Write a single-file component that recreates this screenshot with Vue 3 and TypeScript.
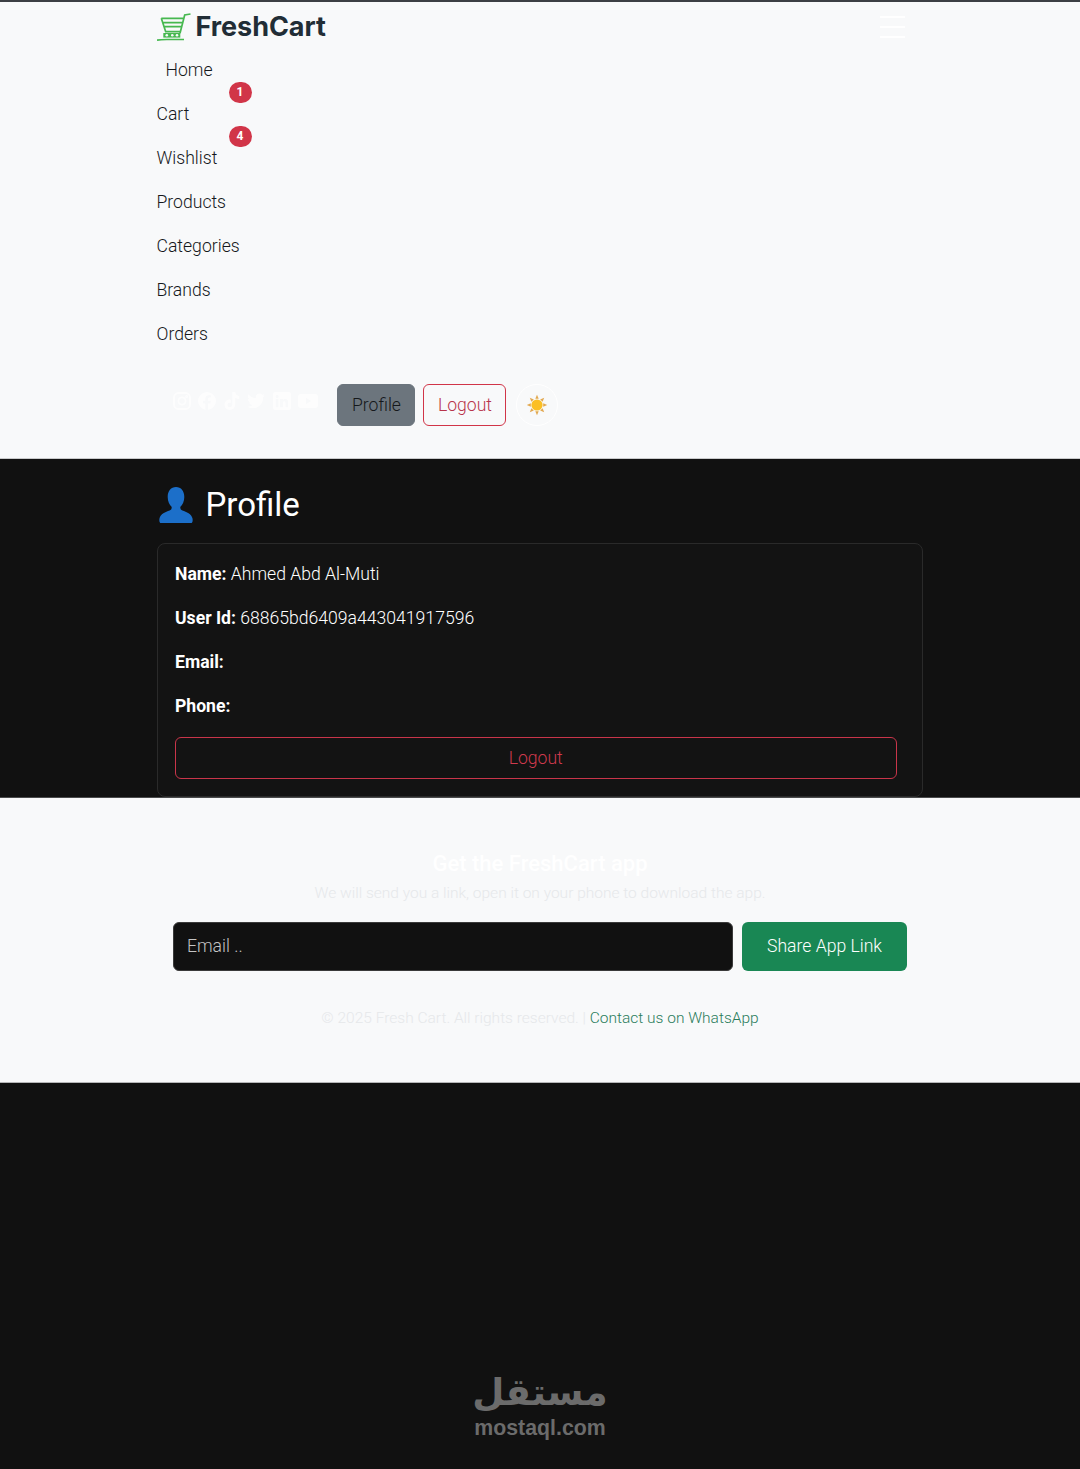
<template>
  <div class="page">
    <header class="navbar">
      <div class="nav-inner">
        <div class="brand-row">
          <a class="brand">
            <svg class="brand-cart" viewBox="0 0 34 28" fill="none" stroke="#46b84f" stroke-width="1.700">
              <path d="M33.500 1L27.700 2 23 20.300" />
              <path d="M4.300 5.300H26.300M6 9.700H25.200M7.200 13.700H24.200M4.300 5.300L8.700 18.700H23.500" />
              <rect x="6.300" y="20" width="17" height="4.600" fill="#46b84f" stroke="none" />
              <circle cx="9.800" cy="22.300" r="1.300" fill="#f8f9fa" stroke="none" />
              <circle cx="15.300" cy="22.300" r="1.300" fill="#f8f9fa" stroke="none" />
              <circle cx="20" cy="22.300" r="1.300" fill="#f8f9fa" stroke="none" />
              <path d="M0 27.200C4 26.300 8 26.500 13 26.500H27" />
            </svg>
            <span class="brand-name">FreshCart</span>
          </a>
          <button class="toggler" type="button">
            <span></span><span></span><span></span>
          </button>
        </div>

        <ul class="nav-list">
          <li v-for="item in navItems" :key="item.label" class="nav-item" :class="{ first: item.label === 'Home' }">
            <a>{{ item.label }}</a>
            <span v-if="item.badge" class="badge">{{ item.badge }}</span>
          </li>
        </ul>

        <div class="actions">
          <div class="socials">
            <svg width="18" height="18" viewBox="0 0 18 18" fill="none" stroke="#fff" stroke-width="1.8">
              <rect x="1" y="1" width="16" height="16" rx="4.5" />
              <circle cx="9" cy="9" r="3.6" />
              <circle cx="13.6" cy="4.4" r=".6" />
            </svg>
            <svg width="18" height="18" viewBox="0 0 18 18">
              <path fill="#fff" fill-rule="evenodd" d="M9 0a9 9 0 1 1 0 18A9 9 0 0 1 9 0zm1 18v-6.6h2.3l.4-2.7H10V7c0-.8.4-1.4 1.5-1.4h1.3V3.3c-2.9-.5-5.4.1-5.4 3.3v2.1H5.2v2.7h2.2V18z" />
            </svg>
            <svg width="16" height="18" viewBox="0 0 16 18">
              <path fill="#fff" d="M8.3 0h3c.2 2.3 1.6 3.8 4 4v3c-1.5 0-2.8-.4-4-1.3v6.6c0 3.400-2.500 5.700-5.600 5.700C2.700 18 .5 15.700.5 12.800c0-3.300 2.900-5.700 6.300-5.100v3.100c-1.700-.5-3.300.4-3.300 2 0 1.400 1 2.300 2.300 2.300 1.400 0 2.500-1 2.500-2.600z" />
            </svg>
            <svg width="18" height="16" viewBox="0 0 18 15">
              <path fill="#fff" d="M18 1.800c-.7.300-1.400.5-2.100.6.800-.5 1.300-1.200 1.600-2-.7.400-1.500.7-2.300.9C14.500.5 13.500 0 12.400 0 10 0 8.300 2.200 8.800 4.500 5.800 4.400 3.100 2.900 1.300.7.300 2.400.8 4.600 2.400 5.700c-.6 0-1.200-.2-1.700-.5 0 1.700 1.200 3.300 3 3.700-.5.100-1.100.2-1.700.100.500 1.500 1.800 2.500 3.400 2.500C4 12.700 2 13.300 0 13.100 1.600 14.200 3.600 14.800 5.700 14.800c6.900 0 10.800-5.800 10.500-11 .7-.5 1.300-1.200 1.800-2z" />
            </svg>
            <svg width="18" height="18" viewBox="0 0 18 18">
              <path fill="#fff" fill-rule="evenodd" d="M2 0h14a2 2 0 0 1 2 2v14a2 2 0 0 1-2 2H2a2 2 0 0 1-2-2V2a2 2 0 0 1 2-2zm.800 7v8.200h2.600V7zm1.300-4a1.500 1.500 0 1 0 0 3 1.500 1.500 0 0 0 0-3zM7.200 7v8.200h2.600v-4.300c0-2.300 2.700-2.400 2.700 0v4.300h2.600v-5c0-3.800-4.100-3.700-5.300-1.800V7z" />
            </svg>
            <svg width="20" height="14" viewBox="0 0 20 14">
              <path fill="#fff" fill-rule="evenodd" d="M3 0h14a3 3 0 0 1 3 3v8a3 3 0 0 1-3 3H3a3 3 0 0 1-3-3V3a3 3 0 0 1 3-3zm5 4v6l5.200-3z" />
            </svg>
          </div>
          <button class="btn btn-profile" type="button">Profile</button>
          <button class="btn btn-logout" type="button">Logout</button>
          <button class="theme" type="button">
            <svg width="22" height="22" viewBox="0 0 22 22">
              <path
                v-for="deg in rays"
                :key="deg"
                d="M9.300 4.800L11 .8l1.700 4z"
                fill="#e2a850"
                :transform="`rotate(${deg} 11 11)`"
              />
              <circle cx="11" cy="11" r="5.600" fill="#fbbf24" />
            </svg>
          </button>
        </div>
      </div>
    </header>

    <main class="profile">
      <div class="profile-inner">
        <h2 class="profile-title">
          <svg width="34" height="36" viewBox="0 0 36 37" preserveAspectRatio="none">
            <path fill="#1c6fc9" d="M18 0c5.400 0 8.800 4.200 8.800 10.200 0 4.300-1.800 8-4.100 10.100-.5 1.800.2 3 2.100 3.800 4.200 1.700 9.700 3.200 10.700 8.400.5 2.700-.3 4.500-1.500 4.500H2c-1.200 0-2-1.800-1.500-4.500 1-5.200 6.500-6.700 10.700-8.400 1.900-.8 2.600-2 2.100-3.800-2.300-2.100-4.100-5.800-4.100-10.100C9.200 4.200 12.600 0 18 0z" />
          </svg>
          <span>Profile</span>
        </h2>
        <section class="card">
          <p v-for="row in profileRows" :key="row.label" class="row">
            <strong>{{ row.label }}</strong> {{ row.value }}
          </p>
          <button class="btn btn-block" type="button">Logout</button>
        </section>
      </div>
    </main>

    <footer class="footer">
      <h5 class="footer-title">Get the FreshCart app</h5>
      <p class="footer-sub">We will send you a link, open it on your phone to download the app.</p>
      <form class="share" @submit.prevent>
        <input class="share-input" type="email" placeholder="Email .." />
        <button class="share-btn" type="submit">Share App Link</button>
      </form>
      <p class="copy">
        © 2025 Fresh Cart. All rights reserved. | <a class="copy-link">Contact us on WhatsApp</a>
      </p>
    </footer>

    <div class="rest">
      <div class="mark">
        <span class="mark-ar" lang="ar" dir="rtl">مستقل</span>
        <span class="mark-en">mostaql.com</span>
      </div>
    </div>
  </div>
</template>

<script setup lang="ts">
interface NavItem {
  label: string
  badge?: number
}

const navItems: NavItem[] = [
  { label: 'Home' },
  { label: 'Cart', badge: 1 },
  { label: 'Wishlist', badge: 4 },
  { label: 'Products' },
  { label: 'Categories' },
  { label: 'Brands' },
  { label: 'Orders' },
]

const profileRows = [
  { label: 'Name:', value: 'Ahmed Abd Al-Muti' },
  { label: 'User Id:', value: '68865bd6409a443041917596' },
  { label: 'Email:', value: '' },
  { label: 'Phone:', value: '' },
]

const rays = [0, 45, 90, 135, 180, 225, 270, 315]
</script>

<style>
html,
body {
  background: #111;
}
</style>

<style scoped>
.page {
  font-family: Roboto, 'Liberation Sans', sans-serif;
  font-size: 17.6px;
  font-weight: 300;
  line-height: 27px;
  color: #15181b;
}

.navbar {
  height: 459px;
  box-sizing: border-box;
  background: #f8f9fa;
  border-top: 2px solid #3c3f44;
  border-bottom: 1px solid #c9cacb;
}

.nav-inner {
  width: 767px;
  margin: 0 auto;
}

.brand-row {
  height: 45px;
  box-sizing: border-box;
  padding: 4px 19px 0 0;
  display: flex;
  align-items: center;
  justify-content: space-between;
}

.brand {
  display: flex;
  align-items: center;
  gap: 5px;
}

.brand-cart {
  width: 34px;
  height: 28px;
}

.brand-name {
  font-family: Inter, Roboto, sans-serif;
  font-size: 27px;
  font-weight: 700;
  letter-spacing: -0.05px;
  color: #212d36;
}

.toggler {
  display: flex;
  flex-direction: column;
  gap: 8px;
  padding: 0;
  border: 0;
  background: none;
}

.toggler span {
  display: block;
  width: 25px;
  height: 2px;
  background: #fff;
}

.nav-list {
  list-style: none;
  margin: 0;
  padding: 0;
}

.nav-item {
  position: relative;
  height: 44px;
  box-sizing: border-box;
  padding-top: 2px;
  display: flex;
  align-items: center;
}

.nav-item.first {
  padding-left: 9px;
}

.badge {
  position: absolute;
  left: 72px;
  top: -9px;
  width: 23px;
  height: 21px;
  border-radius: 11px;
  background: #d13548;
  color: #fff;
  font-size: 12px;
  font-weight: 700;
  line-height: 21px;
  text-align: center;
}

.actions {
  display: flex;
  align-items: center;
  margin-top: 29px;
}

.socials {
  display: flex;
  align-items: center;
  gap: 7.6px;
  margin: -9px 19px 0 16px;
  opacity: 0.75;
}

.btn {
  height: 42px;
  box-sizing: border-box;
  border-radius: 6px;
  font: inherit;
  padding: 0 13px;
}

.btn-profile {
  width: 78px;
  background: #6c757d;
  border: 1px solid #6c757d;
  color: #15181b;
}

.btn-logout {
  width: 83px;
  margin-left: 8px;
  background: transparent;
  border: 1px solid #d13548;
  color: #b8344a;
}

.theme {
  width: 42px;
  height: 42px;
  margin-left: 10px;
  padding: 0;
  display: flex;
  align-items: center;
  justify-content: center;
  border-radius: 50%;
  border: 1px solid #fff;
  background: transparent;
}

.profile {
  height: 339px;
  box-sizing: border-box;
  background: #111;
  color: #fff;
  border-bottom: 1px solid #4a4b4c;
}

.profile-inner {
  width: 767px;
  margin: 0 auto;
}

.profile-title {
  height: 84px;
  box-sizing: border-box;
  margin: 0;
  padding: 7px 0 0 2px;
  display: flex;
  align-items: center;
  gap: 13px;
  font-size: 33px;
  font-weight: 400;
}

.card {
  width: 766px;
  height: 254px;
  box-sizing: border-box;
  padding: 17px 25px 0 17.500px;
  background: #131313;
  border: 1px solid #2a2a2a;
  border-radius: 8px;
}

.row {
  height: 27px;
  margin: 0 0 17px;
}

.row strong {
  font-weight: 700;
}

.btn-block {
  display: block;
  width: 100%;
  margin-top: 4px;
  background: transparent;
  border: 1px solid #c9354a;
  color: #d03a4e;
}

.footer {
  height: 285px;
  box-sizing: border-box;
  padding-top: 52px;
  background: #f8f9fa;
  border-bottom: 1px solid #b5b6b7;
  text-align: center;
}

.footer-title {
  margin: 0 0 3px;
  color: #fff;
  font-size: 22px;
  font-weight: 500;
}

.footer-sub {
  margin: 0 0 15px;
  color: #e6e8ea;
  font-size: 15.5px;
}

.share {
  width: 734px;
  margin: 0 auto;
  display: flex;
  gap: 9px;
}

.share-input {
  flex: 1;
  min-width: 0;
  height: 49px;
  box-sizing: border-box;
  padding: 0 13px 2px;
  background: #111;
  border: 1px solid #3a3a3a;
  border-radius: 6px;
  font: inherit;
  color: #fff;
}

.share-input::placeholder {
  color: #c4c4c4;
  opacity: 1;
}

.share-btn {
  width: 165px;
  height: 49px;
  background: #198754;
  border: 0;
  border-radius: 6px;
  font: inherit;
  color: #fff;
}

.copy {
  margin: 34px 0 0;
  font-size: 15.5px;
  color: #e6e8ea;
}

.copy-link {
  color: #2a7d5c;
}

.rest {
  height: 386px;
  box-sizing: border-box;
  padding-bottom: 29px;
  display: flex;
  align-items: flex-end;
  justify-content: center;
}

.mark {
  display: flex;
  flex-direction: column;
  align-items: center;
  color: #6b6b6b;
}

.mark-ar {
  font-family: 'DejaVu Sans', sans-serif;
  font-size: 37px;
  font-weight: 700;
  line-height: 46px;
}

.mark-en {
  font-family: 'Liberation Sans', sans-serif;
  font-size: 21.300px;
  font-weight: 700;
  line-height: 24px;
}
</style>
